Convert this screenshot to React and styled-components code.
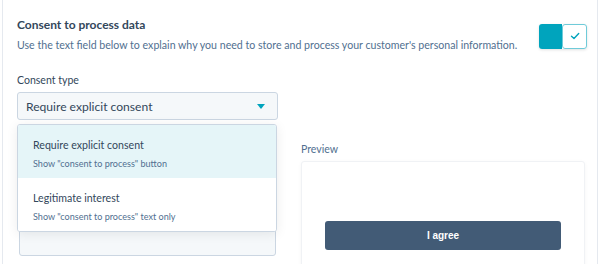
import React from "react";
import styled, { createGlobalStyle } from "styled-components";

const Global = createGlobalStyle`
  html, body { margin: 0; padding: 0; background: #fff; overflow: hidden; }
  body { font-family: "Lato", "Noto Sans", sans-serif; color: #33475b; }
`;

const Panel = styled.div`
  margin: 0 2px;
  min-height: 300px;
  border-left: 1px solid #e5e9ef;
  border-right: 1px solid #e5e9ef;
  padding: 17px 10px 0 14px;
`;

const Header = styled.div`
  display: flex;
  align-items: center;
  justify-content: space-between;
`;

const HeaderText = styled.div`
  display: flex;
  flex-direction: column;
  gap: 4px;
`;

const Title = styled.div`
  font-size: 12px;
  font-weight: 700;
  line-height: 16px;
  color: #33475b;
`;

const Desc = styled.div`
  font-size: 10.6px;
  line-height: 16px;
  color: #516f90;
`;

const Toggle = styled.div`
  display: flex;
  flex-shrink: 0;
  width: 48px;
  height: 25px;
  margin-top: 2px;
  border-radius: 3px;
  box-shadow: 0 1px 3px rgba(0, 0, 0, 0.12);
`;

const ToggleOn = styled.div`
  flex: 1;
  background: #00a4bd;
  border-radius: 3px 0 0 3px;
`;

const ToggleKnob = styled.div`
  flex: 1;
  background: #fff;
  border: 1.5px solid #6fcbd9;
  border-radius: 3px;
  display: flex;
  align-items: center;
  justify-content: center;
`;

const Grid = styled.div`
  display: grid;
  grid-template-columns: 261px 284px;
  column-gap: 23px;
  margin-top: 19px;
`;

const Field = styled.div`
  display: flex;
  flex-direction: column;
  gap: 4px;
  margin-top: ${(p) => p.$top || 0}px;
`;

const Label = styled.div`
  font-size: 10.55px;
  line-height: 16px;
  color: ${(p) => (p.$muted ? "#516f90" : "#33475b")};
`;

const SelectWrap = styled.div`
  position: relative;
`;

const Select = styled.div`
  height: 28px;
  box-sizing: border-box;
  background: #f5f8fa;
  border: 1px solid #cbd6e2;
  border-radius: 3px;
  display: flex;
  align-items: center;
  justify-content: space-between;
  padding: 0 12px 0 8px;
  font-size: 12.1px;
  color: #33475b;
`;

const Caret = styled.div`
  width: 0;
  height: 0;
  border-left: 4px solid transparent;
  border-right: 4px solid transparent;
  border-top: 5px solid #00a4bd;
`;

const Menu = styled.div`
  position: absolute;
  top: 32px;
  left: 0;
  width: 260px;
  background: #fff;
  border: 1px solid #cbd6e2;
  border-radius: 3px;
  box-sizing: border-box;
  box-shadow: 0 2px 12px rgba(0, 0, 0, 0.08);
  z-index: 2;
  overflow: hidden;
`;

const MenuItem = styled.div`
  padding: 12px 15px 7px;
  background: ${(p) => (p.$active ? "#e5f5f8" : "#fff")};
  display: flex;
  flex-direction: column;
  gap: 3px;
`;

const ItemTitle = styled.div`
  font-size: 10.6px;
  line-height: 17px;
  color: #33475b;
`;

const ItemSub = styled.div`
  font-size: 9.05px;
  line-height: 14px;
  color: #516f90;
`;

const TextArea = styled.div`
  margin: 37px 2px 0;
  height: 95px;
  box-sizing: border-box;
  background: #f5f8fa;
  border: 1px solid #cbd6e2;
  border-radius: 3px;
`;

const PreviewBox = styled.div`
  height: 140px;
  border: 1px solid #f0f2f5;
  border-radius: 3px;
  box-shadow: 0 1px 4px rgba(0, 0, 0, 0.04);
  padding: 59px 23px 0;
`;

const AgreeButton = styled.button`
  width: 100%;
  height: 29px;
  border: none;
  border-radius: 3px;
  background: #425b76;
  color: #fff;
  font-family: "Liberation Sans", Arial, sans-serif;
  font-weight: 700;
  font-size: 10px;
`;

export default function App() {
  return (
    <>
      <Global />
      <Panel>
        <Header>
          <HeaderText>
            <Title>Consent to process data</Title>
            <Desc>
              Use the text field below to explain why you need to store and process your customer's personal information.
            </Desc>
          </HeaderText>
          <Toggle>
            <ToggleOn />
            <ToggleKnob>
              <svg width="10" height="8" viewBox="0 0 10 8">
                <path d="M1.5 4.2 L4 6.5 L8.7 1.5" fill="none" stroke="#00a4bd" strokeWidth="1.4" strokeLinecap="round" strokeLinejoin="round" />
              </svg>
            </ToggleKnob>
          </Toggle>
        </Header>
        <Grid>
          <Field>
            <Label>Consent type</Label>
            <SelectWrap>
              <Select>
                <span>Require explicit consent</span>
                <Caret />
              </Select>
              <Menu>
                <MenuItem $active>
                  <ItemTitle>Require explicit consent</ItemTitle>
                  <ItemSub>Show "consent to process" button</ItemSub>
                </MenuItem>
                <MenuItem>
                  <ItemTitle>Legitimate interest</ItemTitle>
                  <ItemSub>Show "consent to process" text only</ItemSub>
                </MenuItem>
              </Menu>
            </SelectWrap>
            <TextArea />
          </Field>
          <Field $top={69}>
            <Label $muted>Preview</Label>
            <PreviewBox>
              <AgreeButton>I agree</AgreeButton>
            </PreviewBox>
          </Field>
        </Grid>
      </Panel>
    </>
  );
}
